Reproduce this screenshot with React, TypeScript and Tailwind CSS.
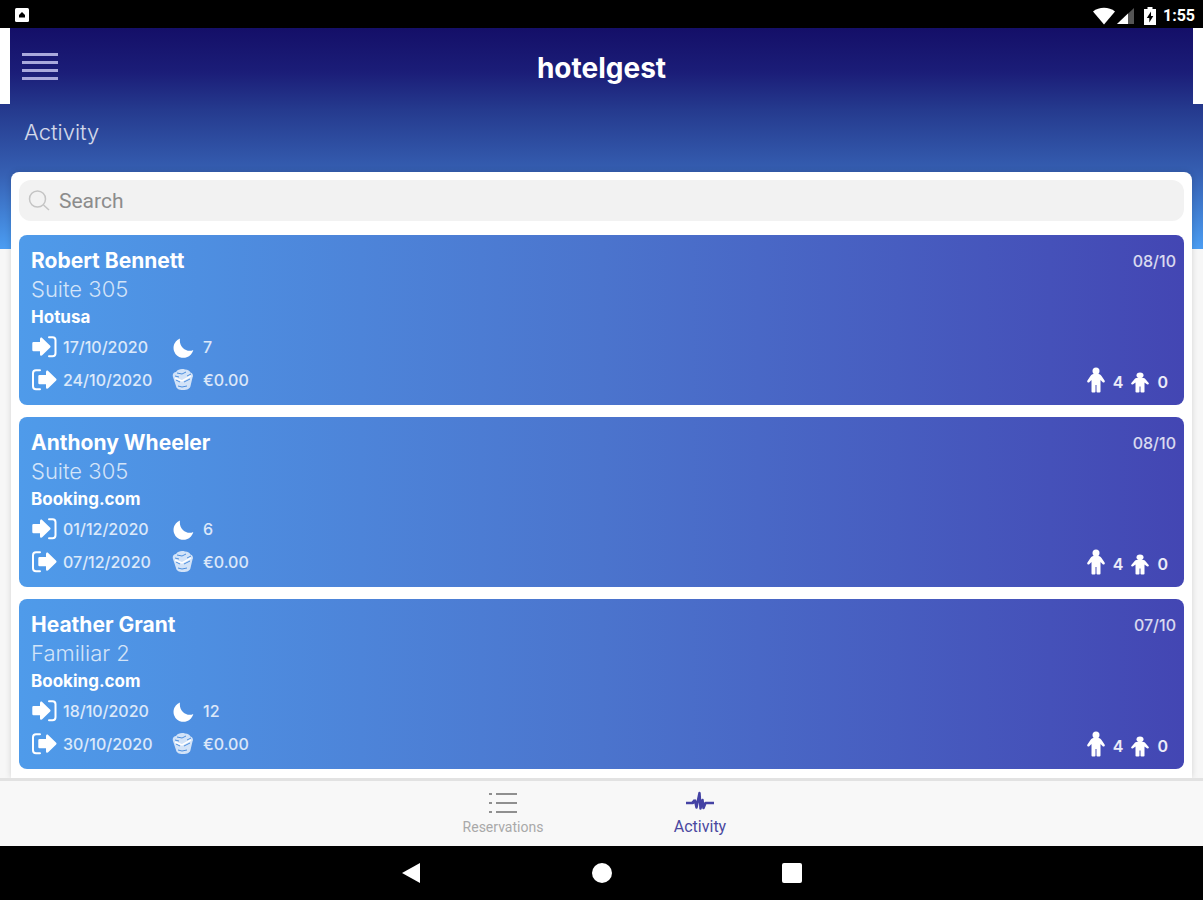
import React, { useState } from 'react'

type Booking = {
  name: string
  room: string
  channel: string
  checkIn: string
  checkOut: string
  nights: number
  price: string
  date: string
  adults: number
  children: number
}

const BOOKINGS: Array<Booking> = [
  { name: 'Robert Bennett', room: 'Suite 305', channel: 'Hotusa', checkIn: '17/10/2020', checkOut: '24/10/2020', nights: 7, price: '€0.00', date: '08/10', adults: 4, children: 0 },
  { name: 'Anthony Wheeler', room: 'Suite 305', channel: 'Booking.com', checkIn: '01/12/2020', checkOut: '07/12/2020', nights: 6, price: '€0.00', date: '08/10', adults: 4, children: 0 },
  { name: 'Heather Grant', room: 'Familiar 2', channel: 'Booking.com', checkIn: '18/10/2020', checkOut: '30/10/2020', nights: 12, price: '€0.00', date: '07/10', adults: 4, children: 0 },
]

const CheckInIcon = () => (
  <svg viewBox="0 0 26 24" className="w-[26px] h-6" fill="none">
    <path d="M2.500 6H9V3c0-1.500 1.300-2 2.200-1.100l8 7.900c.5.500.5 1.100 0 1.600l-8 7.900c-.9.900-2.200.400-2.200-1.100v-3H2.500A1.200 1.200 0 0 1 1.300 14V7.200A1.200 1.200 0 0 1 2.500 6z" fill="white" />
    <path d="M18 1.200h3.500a3 3 0 0 1 3 3v13a3 3 0 0 1-3 3H18" stroke="white" strokeWidth="2" strokeLinecap="round" />
  </svg>
)

const CheckOutIcon = () => (
  <svg viewBox="0 0 26 24" className="w-[26px] h-6" fill="none">
    <path d="M8.500 6H15V3c0-1.500 1.300-2 2.200-1.100l8 7.900c.5.500.5 1.100 0 1.600l-8 7.900c-.9.900-2.200.400-2.200-1.100v-3H8.500A1.200 1.200 0 0 1 7.300 14V7.200A1.200 1.200 0 0 1 8.500 6z" fill="white" />
    <path d="M9 1.200H5a3 3 0 0 0-3 3v13a3 3 0 0 0 3 3h4" stroke="white" strokeWidth="2" strokeLinecap="round" />
  </svg>
)

const MoonIcon = () => (
  <svg viewBox="0 0 22 22" className="w-[22px] h-[22px]" fill="white">
    <path d="M8 1.500A10 10 0 1 0 21.300 13C15.500 16 6.500 11 8 1.500z" />
  </svg>
)

const MoneyIcon = () => (
  <svg viewBox="0 0 24 24" className="w-6 h-6" fill="none">
    <path d="M2 8C1 5 3 3 5 3c2-3 6-3.500 9-2.500 3 0 5 1.500 5.500 3 2.500 1 3 3 2 5L19.500 17c-.4 2.500-3 4-7.500 4s-6.500-1.500-7-4z" fill="white" fillOpacity="0.75" />
    <path d="M6 4l5 1 4-2M4 7l4 1M16 7l4-2M5 11l4 2M13 13l6-3M7 17l4 1 5-1" stroke="#4d8fdf" strokeWidth="1" />
    <path d="M4 9l7 3 9-5" stroke="white" strokeWidth="1.500" />
  </svg>
)

const PersonIcon = ({ className }: { className: string }) => (
  <svg viewBox="0 0 18 26" className={className} fill="white" preserveAspectRatio="none">
    <circle cx="9" cy="4" r="3.500" />
    <path d="M6.500 7h5c1.500 0 2.500 1 3.200 2.300l3 4.400c.7 1.300-1.300 2.500-2.200 1.300L13.500 13v11.500a1 1 0 0 1-1 1h-2a1 1 0 0 1-1-1V18H8.500v6.500a1 1 0 0 1-1 1h-2a1 1 0 0 1-1-1V13l-2 2c-.9 1.200-2.900 0-2.200-1.300l3-4.400C4 8 5 7 6.500 7z" />
  </svg>
)

const StatusBar = () => (
  <div className="flex h-7 shrink-0 items-center justify-between bg-black pl-[15px] pr-2 text-white">
    <svg viewBox="0 0 14 14" className="w-3.5 h-3.5 mt-0.5">
      <rect width="14" height="14" rx="1.500" fill="white" />
      <path d="M4 9.500V7l3-3 3 3v2.500z" fill="black" />
    </svg>
    <div className="flex items-center pt-1">
      <svg viewBox="0 0 22 18" className="w-[22px] h-[18px]" fill="white">
        <path d="M0 4.500C6-.5 16-.5 22 4.500L11 17.500z" />
      </svg>
      <svg viewBox="0 0 18 16" className="w-[18px] h-4 ml-0.5">
        <path d="M17 0v16H0z" fill="#555" />
        <path d="M11 5.600V16H0z" fill="white" />
      </svg>
      <svg viewBox="0 0 14 18" className="w-3.5 h-[18px] ml-2">
        <path d="M4.500 0h5v2H13v16H1V2h3.500z" fill="white" />
        <path d="M8 4.500L3.800 11h2.500v4.500L10.300 9H8z" fill="black" />
      </svg>
      <span className="ml-1.5 text-base leading-5 font-bold font-[Roboto,sans-serif]">1:55</span>
    </div>
  </div>
)

const BookingCard = ({ booking }: { booking: Booking }) => (
  <article className="flex justify-between rounded-lg bg-linear-to-r from-[#4f9bea] via-[#4b74cd] to-[#4346b3] pl-3 pr-2 pt-3 pb-2 text-white">
    <div>
      <h2 className="text-[21px] leading-7 font-bold">{booking.name}</h2>
      <div className="text-[22px] leading-7 font-light text-white/75">{booking.room}</div>
      <div className="text-[17px] leading-7 font-bold">{booking.channel}</div>
      <div className="grid grid-cols-[140px_auto] text-base leading-[33px] font-medium text-white/80">
        <div className="flex items-center gap-1.5"><CheckInIcon />{booking.checkIn}</div>
        <div className="flex items-center gap-2"><span className="flex w-6 justify-center"><MoonIcon /></span>{booking.nights}</div>
        <div className="flex items-center gap-1.5"><CheckOutIcon />{booking.checkOut}</div>
        <div className="flex items-center gap-2"><MoneyIcon />{booking.price}</div>
      </div>
    </div>
    <div className="flex flex-col items-end justify-between">
      <div className="text-base leading-7 font-medium text-white/80">{booking.date}</div>
      <div className="flex items-end pr-2 text-base leading-[30px] font-semibold text-white/90">
        <PersonIcon className="w-[18px] h-[26px] mb-1 mr-2" />
        {booking.adults}
        <PersonIcon className="w-[18px] h-[21px] mb-1 ml-2 mr-2" />
        {booking.children}
      </div>
    </div>
  </article>
)

const App = () => {
  const [search, setSearch] = useState('')
  const bookings = BOOKINGS.filter((b) => b.name.toLowerCase().includes(search.toLowerCase()))

  return (
    <div className="flex h-screen flex-col overflow-hidden bg-[#f7f7f7] font-[Inter,sans-serif]">
      <StatusBar />

      <main className="flex min-h-0 flex-1 flex-col bg-[linear-gradient(180deg,#140f68_0%,#1b1d78_20%,#253a8e_37%,#3660b3_66%,#4b9df2_100%)] bg-[length:100%_221px] bg-no-repeat">
        <header className="grid h-[76px] shrink-0 grid-cols-[1fr_auto_1fr] items-center border-x-10 border-white px-3">
          <button type="button" aria-label="Menu" className="flex w-9 flex-col gap-[5px]">
            <span className="h-[3px] w-full bg-[#a9a9dc]" />
            <span className="h-[3px] w-full bg-[#a9a9dc]" />
            <span className="h-[3px] w-full bg-[#a9a9dc]" />
            <span className="h-[3px] w-full bg-[#a9a9dc]" />
          </button>
          <div className="pt-1 text-[28px] leading-8 font-bold text-white">hotelgest</div>
        </header>

        <h1 className="shrink-0 px-6 pt-3 pb-6 text-[22px] leading-8 font-light text-white/80">Activity</h1>

        <section className="mx-[11px] flex min-h-0 flex-1 flex-col rounded-t-lg bg-white px-2 pt-2 shadow-[0_0_6px_rgba(0,0,0,0.15)]">
          <label className="flex h-[41px] shrink-0 items-center gap-2 rounded-xl bg-[#f2f2f2] px-2">
            <svg viewBox="0 0 24 24" className="w-6 h-6 shrink-0" fill="none" stroke="#c4c4c4" strokeWidth="1.500">
              <circle cx="10.500" cy="10" r="8" />
              <path d="M16.500 16l5.500 5" />
            </svg>
            <input
              type="text"
              aria-label="Search"
              placeholder="Search"
              value={search}
              onChange={(e) => setSearch(e.target.value)}
              className="min-w-0 flex-1 bg-transparent text-[21px] leading-7 text-[#666] outline-none placeholder:text-[#8c8c8c] font-[Roboto,sans-serif]"
            />
          </label>
          <div className="mt-3.5 flex min-h-0 flex-1 flex-col gap-3 overflow-hidden">
            {bookings.map((booking) => <BookingCard key={booking.name} booking={booking} />)}
          </div>
        </section>
      </main>

      <nav className="flex h-[68px] shrink-0 justify-center border-t-3 border-[#e2e2e2] bg-[#f8f8f8] font-[Roboto,sans-serif]">
        <a href="#reservations" className="flex w-[197px] flex-col items-center pt-2 text-sm text-[#a9a9a9]">
          <svg viewBox="0 0 28 28" className="w-7 h-7" stroke="#8f8f8f" strokeWidth="2">
            <path d="M0 5h3M7 5h21M0 14h3M7 14h21M0 23h3M7 23h21" />
          </svg>
          <span className="leading-5">Reservations</span>
        </a>
        <a href="#activity" className="flex w-[197px] flex-col items-center pt-2 text-base text-[#4a48a0]">
          <svg viewBox="0 0 28 28" className="w-7 h-7" fill="none" stroke="#4442a4" strokeWidth="2" strokeLinejoin="round">
            <path d="M0 14h6l2.500-3M15.500 14" />
            <path d="M0 14h7l2-2.500 1.500 7L13.500 4l1 15.500 2-8.500 1 8 2-5H28" strokeWidth="2.500" />
          </svg>
          <span className="leading-5">Activity</span>
        </a>
      </nav>

      <div className="flex h-[54px] shrink-0 items-center justify-center gap-[170px] bg-black">
        <button type="button" aria-label="Back">
          <svg viewBox="0 0 20 20" className="w-5 h-5" fill="white"><path d="M18 0v20L0 10z" /></svg>
        </button>
        <button type="button" aria-label="Home" className="h-5 w-5 rounded-full bg-white" />
        <button type="button" aria-label="Recent apps" className="h-5 w-5 rounded-xs bg-white" />
      </div>
    </div>
  )
}

export default App
